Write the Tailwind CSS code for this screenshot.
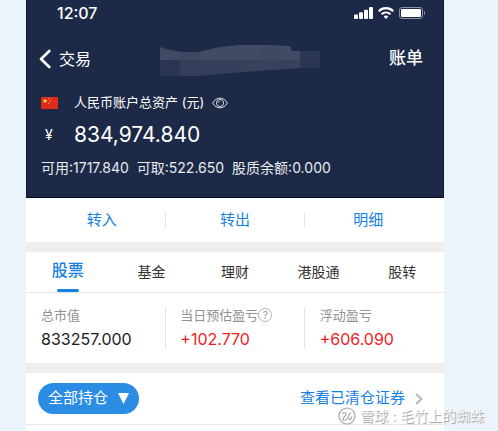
<!DOCTYPE html>
<html lang="zh-CN">
<head>
<meta charset="utf-8">
<meta name="viewport" content="width=device-width, initial-scale=1">
<title>交易账户</title>
<script src="https://cdn.jsdelivr.net/npm/@tailwindcss/browser@4"></script>
</head>
<body class="relative min-h-screen bg-[#ebf3fb] pl-[26px] pr-[54px] font-['Inter','Noto_Sans_CJK_SC',sans-serif]">
<div class="flex min-h-screen flex-col bg-[#eeeeee]">
  <header class="border-x border-b border-x-[#10172f] border-b-[#060b20] bg-[#1d2a47] pb-[17px] text-white">
    <div class="flex h-[26px] items-center justify-between pl-[30px] pr-[17px]">
      <time class="text-base font-medium">12:07</time>
      <div class="flex items-center gap-[5px]">
        <svg class="h-3 w-[19px]" viewBox="0 0 19 12" fill="#fff" aria-label="信号"><rect x="0" y="7.5" width="4" height="4.5" rx="1"/><rect x="5" y="5.3" width="4" height="6.7" rx="1"/><rect x="10" y="2.8" width="4" height="9.2" rx="1"/><rect x="15" y="0" width="4" height="12" rx="1"/></svg>
        <svg class="h-3 w-4" viewBox="0 0 16 12" fill="none" stroke="#fff" stroke-width="2.2" aria-label="无线网络"><path d="M.8 4.2C4.800.2 11.200.2 15.200 4.200"/><path d="M3.600 7.200c2.500-2.300 6.300-2.300 8.800 0"/><path d="M5.600 9.400c1.500-1.200 3.300-1.200 4.800 0L8 11.900z" fill="#fff" stroke="none"/></svg>
        <svg class="h-3 w-[27px]" viewBox="0 0 27 12" aria-label="电池"><rect x=".5" y=".5" width="23" height="11" rx="2.500" fill="none" stroke="#8b93a5"/><rect x="2" y="2" width="20" height="8" rx="1" fill="#fff"/><path d="M25 4v4c1.600-.6 1.600-3.400 0-4z" fill="#8b93a5"/></svg>
      </div>
    </div>
    <nav class="mt-[17px] flex h-8 items-center justify-between pl-3 pr-5">
      <a href="#" class="flex items-center gap-2 text-base">
        <svg class="h-5 w-3" viewBox="0 0 12 20" fill="none" stroke="#fff" stroke-width="2.600" stroke-linecap="round" stroke-linejoin="round"><path d="M10.300 2 2 10l8.300 8"/></svg>
        交易
      </a>
      <svg class="h-[34px] w-40" viewBox="0 0 160 34" aria-hidden="true">
        <path fill="#424b64" d="M0 5l10 3 12 2h16l22-5 20-2h30l20 1 2 5h8v9H0z"/>
        <path fill="#343e5a" d="M0 19l9-1h131v8l-30 2-50 4-30 3H0z"/>
        <path fill="#2b3655" d="M0 19l9-1h11v17H0zM140 9h20v17h-20z"/>
        <path fill="#3c465f" d="M20 10h20v8H20zM100 3h20v15h-20zM80 18h60v8l-30 2-30 2z" opacity=".6"/>
      </svg>
      <a href="#" class="text-[17px] font-medium">账单</a>
    </nav>
    <div class="mt-4 flex h-6 items-center pl-[14px]">
      <svg class="h-3 w-[17px]" viewBox="0 0 17 12" aria-label="中国"><rect width="17" height="12" fill="#df2a1c"/><path fill="#ffe24a" d="m4 1.500.7 1.600 1.700.1-1.300 1.100.4 1.700L4 5.100 2.500 6l.4-1.700-1.300-1.100 1.700-.1z"/><path fill="#f8b43a" d="M7 1h1v1H7zM8.500 2.500h1v1h-1zM8.500 4.500h1v1h-1zM7 6h1v1H7z"/></svg>
      <h1 class="ml-4 text-[13px]">人民币账户总资产 (元)</h1>
      <button type="button" aria-label="显示或隐藏金额" class="ml-2">
        <svg class="h-3 w-4" viewBox="0 0 16 12" fill="none" stroke="#d5d9e2"><path d="M.7 6C4-.5 12-.5 15.300 6 12 12.500 4 12.500.7 6z"/><circle cx="8" cy="6" r="3.600"/><path d="M6.200 6c0-1 .8-1.800 1.800-1.800"/></svg>
      </button>
    </div>
    <p class="mt-1 flex h-8 items-center pl-[18px]"><span class="w-[29px] text-sm">¥</span><span class="text-[21px]">834,974.840</span></p>
    <p class="mt-1 flex h-[25px] items-center gap-2 whitespace-nowrap pl-[14px] text-sm text-[#e9ebef]"><span>可用:1717.840</span><span>可取:522.650</span><span>股质余额:0.000</span></p>
  </header>

  <nav class="grid h-11 grid-cols-3 items-center bg-white text-center text-[15px] text-[#1581e4]">
    <a href="#" class="pl-3">转入</a>
    <a href="#" class="flex items-center justify-center"><span class="h-[14px] w-px bg-[#e5e5e5]"></span><span class="grow">转出</span><span class="h-[14px] w-px bg-[#e5e5e5]"></span></a>
    <a href="#" class="pr-3">明细</a>
  </nav>

  <section class="mt-[10px] bg-white">
    <nav class="grid h-[41px] grid-cols-5 border-b border-[#e6e6e6] text-center text-sm leading-10 text-[#333]">
      <a href="#" aria-current="page" class="flex flex-col items-center text-base leading-[37px] font-medium text-[#1581e4]">股票<span class="h-[3px] w-[22px] rounded-full bg-[#1581e4]"></span></a>
      <a href="#">基金</a>
      <a href="#">理财</a>
      <a href="#">港股通</a>
      <a href="#">股转</a>
    </nav>
    <dl class="grid grid-cols-3 py-[14px] text-[13px] text-[#929292]">
      <div class="pl-[15px]"><dt class="h-4 leading-4">总市值</dt><dd class="mt-[6px] h-5 text-base leading-5 text-[#1c1c1c]">833257.000</dd></div>
      <div class="border-x border-[#e5e5e5] pl-[14px]"><dt class="flex h-4 items-center leading-4 whitespace-nowrap">当日预估盈亏<button type="button" aria-label="说明" class="flex size-[14px] items-center justify-center rounded-full border border-[#b5b5b5] text-[10px] leading-3">?</button></dt><dd class="mt-[6px] h-5 text-base leading-5 text-[#ee1c1c]">+102.770</dd></div>
      <div class="pl-[15px]"><dt class="h-4 leading-4">浮动盈亏</dt><dd class="mt-[6px] h-5 text-base leading-5 text-[#ee1c1c]">+606.090</dd></div>
    </dl>
  </section>

  <section class="mt-[10px] flex grow flex-col bg-white">
    <div class="flex h-[52px] items-center justify-between border-b border-[#e6e6e6] pl-3 pr-[21px]">
      <button type="button" class="flex h-[31px] items-center gap-[10px] rounded-full bg-[#2b8ce4] px-[10px] text-[15px] text-white">全部持仓<svg class="h-[11px] w-[11px]" viewBox="0 0 11 11" fill="#fff"><path d="M0 0h11L5.500 11z"/></svg></button>
      <a href="#" class="flex items-center gap-[10px] text-[15px] text-[#1581e4]">查看已清仓证券<svg class="h-3 w-2" viewBox="0 0 8 12" fill="none" stroke="#b8b8b8" stroke-width="2"><path d="m1 1 5.500 5L1 11"/></svg></a>
    </div>
  </section>
</div>

<div class="absolute right-[14px] bottom-[5px] flex items-center gap-1 text-sm leading-5 whitespace-nowrap text-white/80 [text-shadow:1px_1px_1px_#999]">
  <svg class="size-[18px]" viewBox="0 0 18 18" fill="none" stroke="#a5a5a5" stroke-width="1.200"><circle cx="9" cy="9" r="8"/><path d="M4 7c1.500-2 4-1.500 4 .5S5 10 5 12s3 1.500 4.500-.5 1-5 3.500-5.500M10.500 12.500c1.500 0 3-1 3.500-3"/></svg>
  <span class="flex gap-1"><span class="font-medium">雪球</span><span>:</span><span>毛竹上的蜘蛛</span></span>
</div>
</body>
</html>
